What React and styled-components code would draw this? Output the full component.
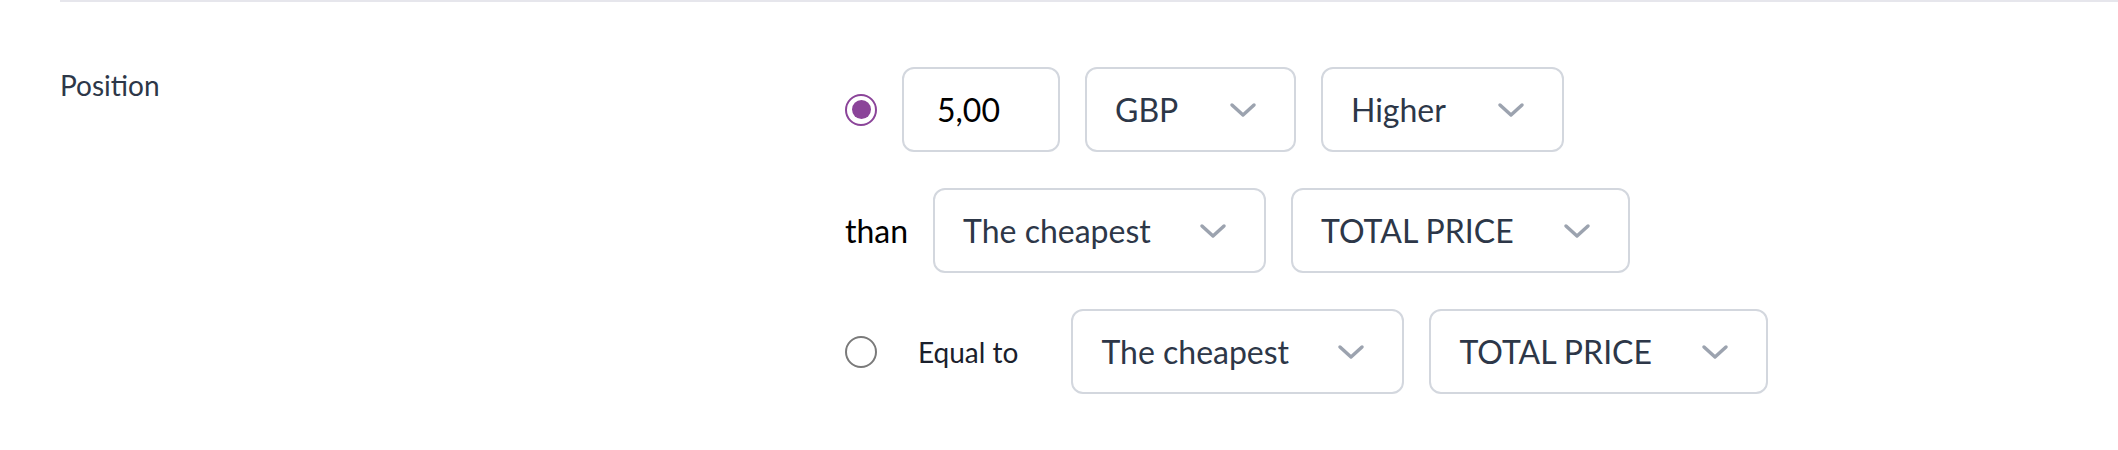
import React from 'react';
import styled, { createGlobalStyle } from 'styled-components';

const GlobalStyle = createGlobalStyle`
  body {
    margin: 0;
    background: #fff;
    font-family: Lato, 'Open Sans', sans-serif;
  }
`;

const Page = styled.div`
  width: 2118px;
  height: 450px;
  overflow: hidden;
`;

const Divider = styled.div`
  margin-left: 60px;
  height: 2px;
  background: #e6e6ec;
`;

const Section = styled.div`
  display: grid;
  grid-template-columns: 785px 1fr;
  padding: 65px 0 0 60px;
`;

const Label = styled.div`
  margin-top: 2px;
  font-size: 28px;
  line-height: 32px;
  color: #2d3748;
`;

const Controls = styled.div`
  display: flex;
  flex-direction: column;
  gap: 36px;
`;

const Row = styled.div`
  display: flex;
  align-items: center;
  gap: 25px;
  height: 85px;
`;

const Radio = styled.span`
  box-sizing: border-box;
  width: 32px;
  height: 32px;
  border-radius: 50%;
  border: 2px solid ${p => (p.$checked ? '#8b4499' : '#7a7a7a')};
  display: flex;
  align-items: center;
  justify-content: center;
  flex-shrink: 0;

  &::after {
    content: '';
    display: ${p => (p.$checked ? 'block' : 'none')};
    width: 19px;
    height: 19px;
    border-radius: 50%;
    background: #8b4499;
  }
`;

const Box = styled.div`
  box-sizing: border-box;
  width: ${p => p.$w}px;
  height: 85px;
  border: 2px solid #d3d7de;
  border-radius: 12px;
  background: #fff;
  display: flex;
  align-items: center;
  font-size: 32px;
`;

const Input = styled(Box)`
  padding-left: 33px;
  color: #000;
`;

const Select = styled(Box)`
  justify-content: space-between;
  padding: 0 37px 0 28px;
  color: #2d3748;
`;

const Word = styled.span`
  font-size: ${p => p.$size}px;
  color: ${p => p.$color};
  padding: ${p => p.$pad || '0'};
`;

const Chevron = () => (
  <svg width="28" height="16" viewBox="0 0 28 16">
    <polyline
      points="3,3 14,13 25,3"
      fill="none"
      stroke="#9ca3af"
      strokeWidth="3.5"
      strokeLinecap="round"
      strokeLinejoin="round"
    />
  </svg>
);

const Dropdown = ({ width, value }) => (
  <Select $w={width}>
    <span>{value}</span>
    <Chevron />
  </Select>
);

export default function App() {
  return (
    <Page>
      <GlobalStyle />
      <Divider />
      <Section>
        <Label>Position</Label>
        <Controls>
          <Row>
            <Radio $checked />
            <Input $w={158}>5,00</Input>
            <Dropdown width={211} value="GBP" />
            <Dropdown width={243} value="Higher" />
          </Row>
          <Row>
            <Word $size={32} $color="#000">than</Word>
            <Dropdown width={333} value="The cheapest" />
            <Dropdown width={339} value="TOTAL PRICE" />
          </Row>
          <Row>
            <Radio />
            <Word $size={28} $color="#1a202c" $pad="0 28px 0 16px">Equal to</Word>
            <Dropdown width={333} value="The cheapest" />
            <Dropdown width={339} value="TOTAL PRICE" />
          </Row>
        </Controls>
      </Section>
    </Page>
  );
}
